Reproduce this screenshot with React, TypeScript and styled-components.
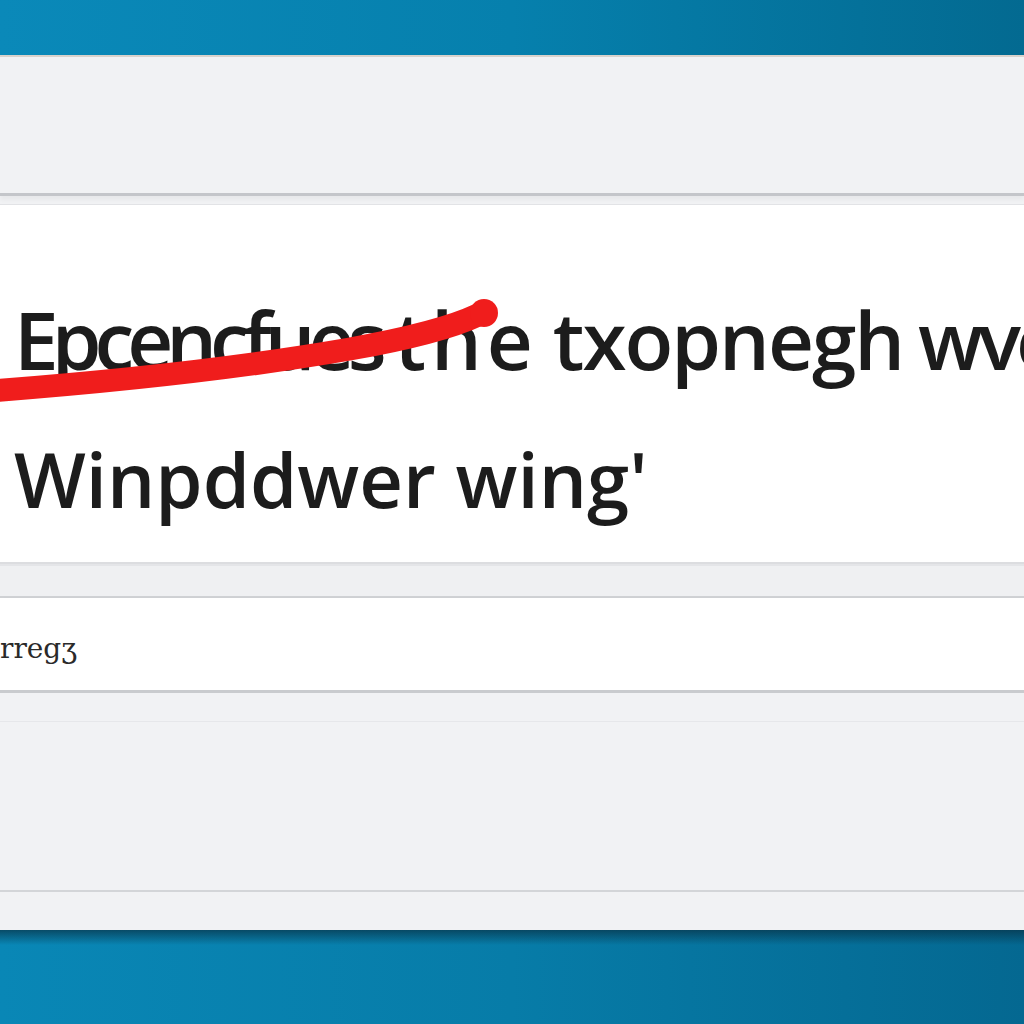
import styled, { createGlobalStyle } from 'styled-components';

const GlobalStyle = createGlobalStyle`
  html, body {
    margin: 0;
    padding: 0;
  }
  body {
    font-family: 'Open Sans', 'Liberation Sans', sans-serif;
    background: #f1f2f4;
  }
`;

export default function App() {
  return (
    <>
      <GlobalStyle />
      <Page>
        <TopBar />
        <Window>
          <Header />
          <MessageCard>
            <Strike viewBox="0 0 1024 360" preserveAspectRatio="none">
              <path
                d="M -10 186 Q 200 170 350 144 Q 440 128 478 110"
                fill="none"
                stroke="#f01d1c"
                strokeWidth="23"
                strokeLinecap="round"
              />
              <circle cx="484" cy="108" r="14" fill="#f01d1c" />
            </Strike>
            <HeadLine>
              <Squeezed>Epcencfues</Squeezed> <Wide>the</Wide> txopnegh <Tight>wve</Tight>
            </HeadLine>
            <SubLine>Winpddwer wing'</SubLine>
          </MessageCard>
          <Divider />
          <InputBar>
            <InputText>rregʒ</InputText>
          </InputBar>
          <LowerArea>
            <FaintRule />
            <LowerRule />
          </LowerArea>
        </Window>
        <BottomBar />
      </Page>
    </>
  );
}

const Page = styled.div`
  display: flex;
  flex-direction: column;
  width: 1024px;
  height: 1024px;
  overflow: hidden;
`;

const TopBar = styled.div`
  height: 55px;
  flex-shrink: 0;
  background: linear-gradient(90deg, #0a89b9 0%, #0680ad 50%, #036a91 100%);
  border-bottom: 2px solid #d8d2cc;
`;

const Window = styled.div`
  flex: 1;
  display: flex;
  flex-direction: column;
  background: #f1f2f4;
`;

const Header = styled.div`
  height: 136px;
  background: #f1f2f4;
  border-bottom: 3px solid #c4c6ca;
  box-shadow: 0 4px 4px rgba(0, 0, 0, 0.04);
`;

const MessageCard = styled.div`
  position: relative;
  margin-top: 8px;
  height: 360px;
  padding: 94px 0 0 14px;
  box-sizing: border-box;
  background: #ffffff;
  border-top: 1px solid #e2e3e6;
  border-bottom: 2px solid #dcdde0;
  overflow: hidden;
  color: #1c1c1c;
  white-space: nowrap;
`;

const Strike = styled.svg`
  position: absolute;
  left: 0;
  top: 0;
  width: 1024px;
  height: 360px;
  pointer-events: none;
`;

const HeadLine = styled.div`
  font-size: 80px;
  line-height: 80px;
  font-weight: 600;
  letter-spacing: -2px;
  word-spacing: -4px;
`;

const Squeezed = styled.span`
  letter-spacing: -7px;
`;

const Wide = styled.span`
  letter-spacing: 5px;
`;

const Tight = styled.span`
  letter-spacing: -5px;
`;

const SubLine = styled.div`
  margin-top: 63px;
  font-size: 76px;
  line-height: 74px;
  font-weight: 600;
  letter-spacing: 0;
`;

const Divider = styled.div`
  height: 30px;
  border-top: 2px solid #e4e5e8;
  border-bottom: 2px solid #cfd1d4;
  background: #eff0f2;
`;

const InputBar = styled.div`
  height: 92px;
  display: flex;
  align-items: center;
  background: #ffffff;
  border-bottom: 3px solid #c9cbce;
  box-shadow: 0 4px 6px rgba(0, 0, 0, 0.06);
`;

const InputText = styled.span`
  font-family: 'DejaVu Serif', 'Liberation Serif', serif;
  font-size: 28px;
  color: #2a2a2a;
  margin-top: 8px;
`;

const LowerArea = styled.div`
  flex: 1;
  display: flex;
  flex-direction: column;
  justify-content: space-between;
  padding: 28px 0 38px;
  background: #f1f2f4;
`;

const FaintRule = styled.div`
  height: 1px;
  background: #e6e7ea;
`;

const LowerRule = styled.div`
  height: 2px;
  background: #d3d5d8;
`;

const BottomBar = styled.div`
  height: 94px;
  flex-shrink: 0;
  background:
    linear-gradient(180deg, rgba(8, 50, 70, 0.7) 0%, rgba(8, 50, 70, 0) 16%),
    linear-gradient(90deg, #0987b6 0%, #077ca8 50%, #046891 100%);
`;
